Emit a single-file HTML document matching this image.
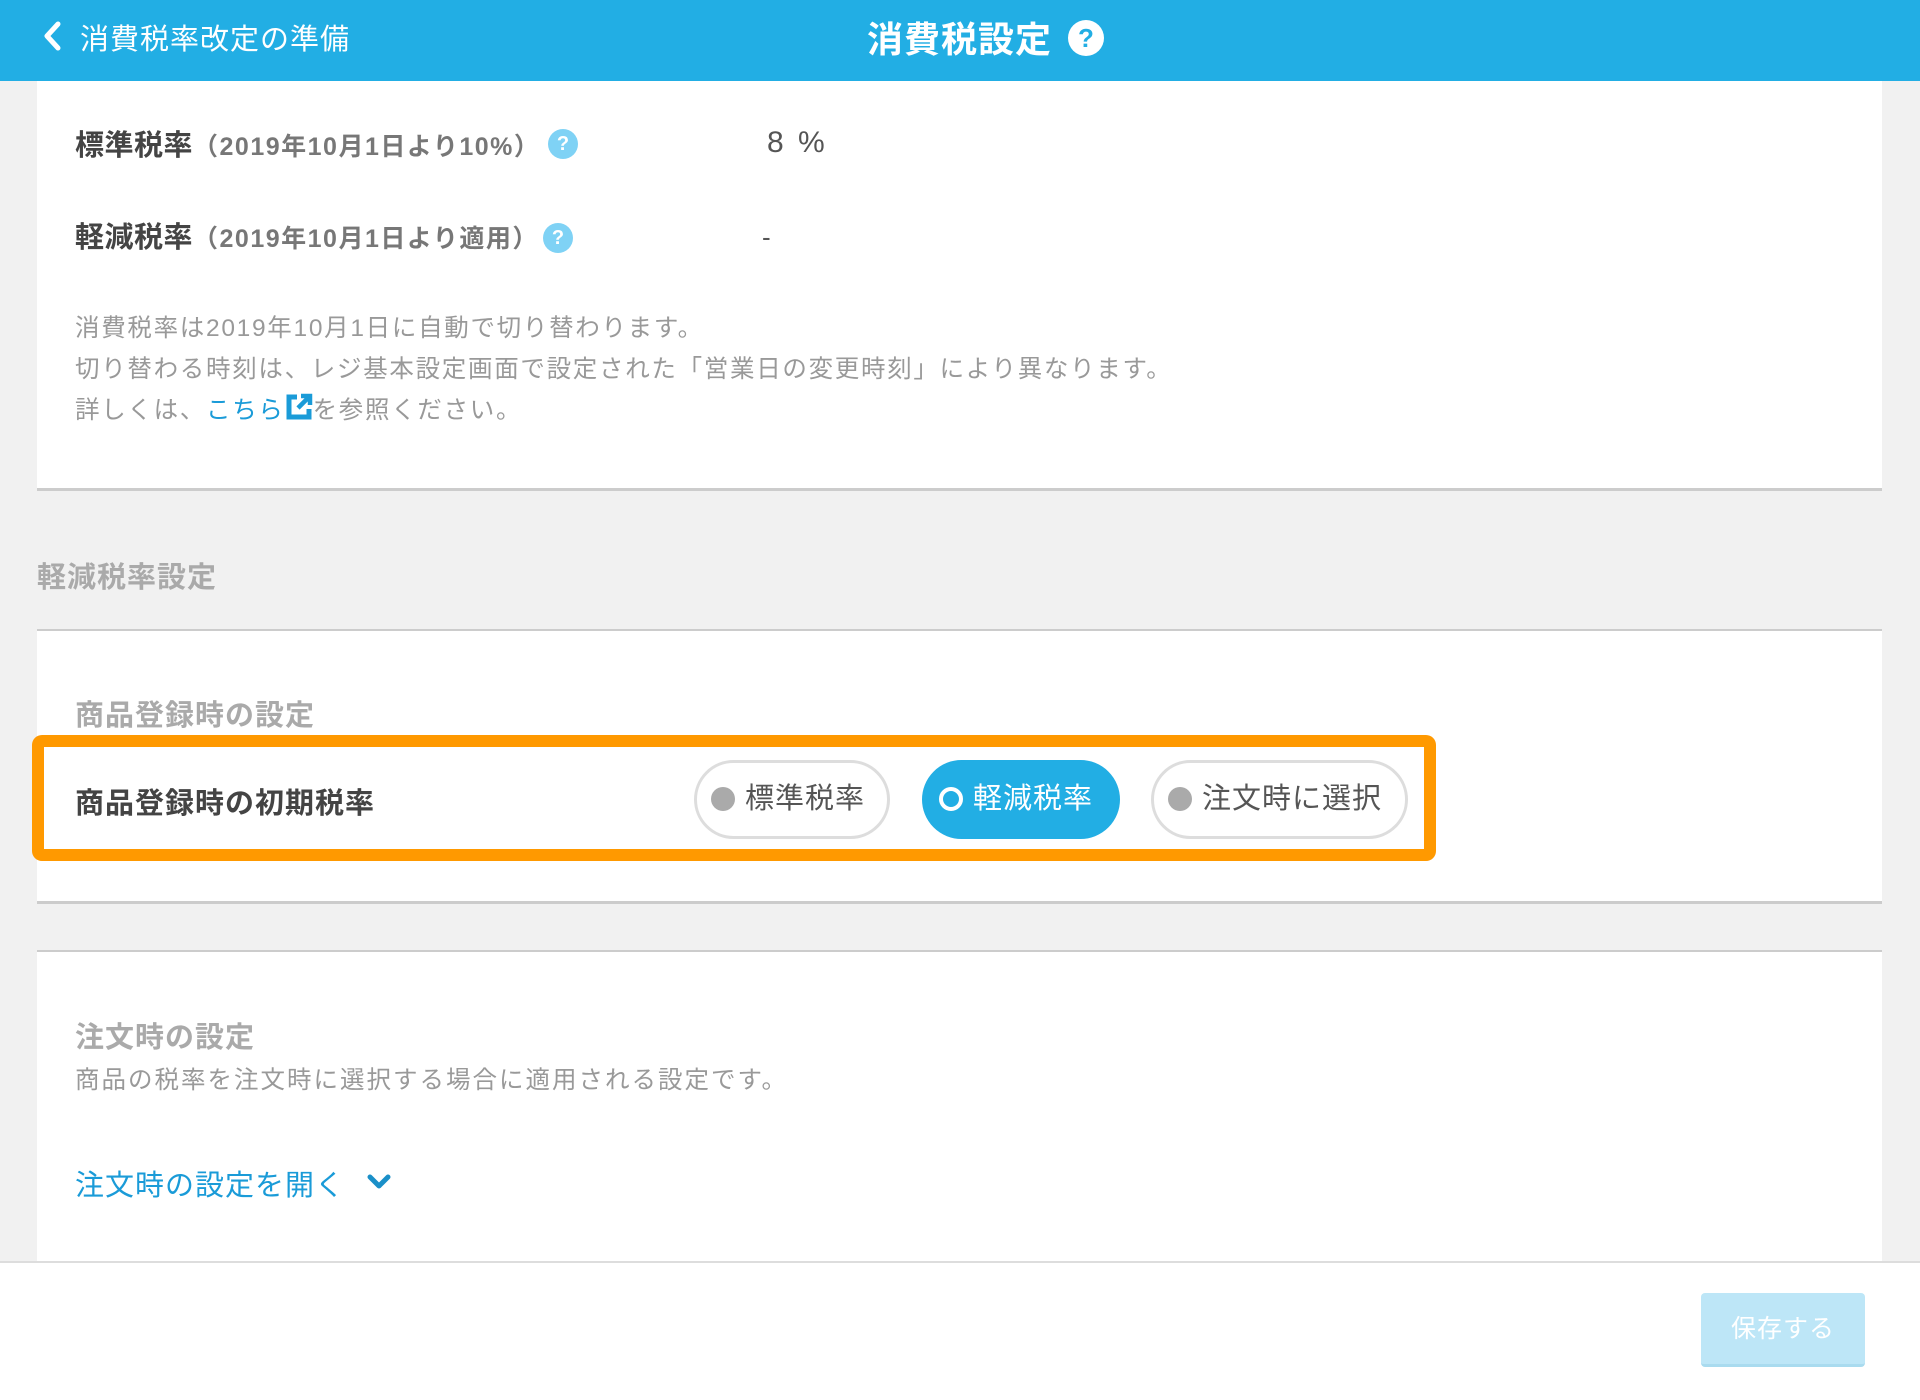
<!DOCTYPE html>
<html><head><meta charset="utf-8"><style>
*{margin:0;padding:0;box-sizing:border-box}
body{width:1920px;height:1400px;background:#f1f1f1;font-family:"Liberation Sans","Noto Sans CJK JP",sans-serif;position:relative;overflow:hidden}
.a{position:absolute;white-space:nowrap}
.hdr{position:absolute;left:0;top:0;width:1920px;height:81px;background:#22aee4}
.panel{position:absolute;left:37px;width:1845px;background:#fff}
.q{position:absolute;border-radius:50%;background:#7fd2f5;color:#fff;font-weight:bold;text-align:center}
.pill{position:absolute;top:760px;height:79px;border-radius:40px;border:3px solid #ddd;background:#fff;font-size:29px;color:#555;line-height:73px;letter-spacing:1px}
.dot{display:inline-block;width:24px;height:24px;border-radius:50%;background:#aaa;vertical-align:-3px;margin:0 10px 0 14px}
</style></head><body>
<div class="hdr"></div>
<svg class="a" style="left:40px;top:20px" width="24" height="32" viewBox="0 0 24 32"><path d="M18 4 L7 16 L18 28" stroke="#fff" stroke-width="5" fill="none" stroke-linecap="round" stroke-linejoin="round"/></svg>
<div class="a" style="left:80px;top:16px;font-size:29px;color:#fff;letter-spacing:1px">消費税率改定の準備</div>
<div class="a" style="left:867px;top:11px;font-size:36px;color:#fff;font-weight:bold;letter-spacing:1px">消費税設定</div>
<div class="q" style="left:1068px;top:20px;width:36px;height:36px;background:#fff;color:#22aee4;font-size:26px;line-height:36px">?</div>

<div class="panel" style="top:81px;height:410px;border-bottom:3px solid #ccc"></div>
<div class="a" style="left:75px;top:122px;font-size:29px;color:#444;font-weight:bold;letter-spacing:0.5px">標準税率<span style="font-size:25px;color:#777;letter-spacing:1.5px">（2019年10月1日より10%）</span></div>
<div class="q" style="left:548px;top:129px;width:30px;height:30px;font-size:20px;line-height:30px">?</div>
<div class="a" style="left:767px;top:126px;font-size:30px;color:#555;letter-spacing:3px">8 %</div>
<div class="a" style="left:75px;top:214px;font-size:29px;color:#444;font-weight:bold;letter-spacing:0.5px">軽減税率<span style="font-size:25px;color:#777;letter-spacing:1.5px">（2019年10月1日より適用）</span></div>
<div class="q" style="left:543px;top:223px;width:30px;height:30px;font-size:20px;line-height:30px">?</div>
<div class="a" style="left:762px;top:222px;font-size:26px;color:#555">-</div>
<div class="a" style="left:75px;top:308px;font-size:24.5px;color:#999;line-height:41px;letter-spacing:1.7px">消費税率は2019年10月1日に自動で切り替わります。<br>切り替わる時刻は、レジ基本設定画面で設定された「営業日の変更時刻」により異なります。<br>詳しくは、<span style="color:#1a9bd8">こちら</span><svg width="28" height="28" viewBox="0 0 28 28" style="vertical-align:-3px"><path d="M12 4H4v20h20v-8" stroke="#1a9bd8" stroke-width="5" fill="none"/><path d="M13 15L24 4M16 3h9v9" stroke="#1a9bd8" stroke-width="4.5" fill="none"/></svg>を参照ください。</div>

<div class="a" style="left:37px;top:554px;font-size:29px;color:#aaa;font-weight:bold;letter-spacing:1px">軽減税率設定</div>
<div class="panel" style="top:629px;height:275px;border-top:2px solid #ccc;border-bottom:3px solid #ccc"></div>
<div class="a" style="left:75px;top:692px;font-size:29px;color:#aaa;font-weight:bold;letter-spacing:1px">商品登録時の設定</div>
<div class="a" style="left:32px;top:735px;width:1404px;height:126px;border:12px solid #ff9900;border-radius:10px;background:#fff"></div>
<div class="a" style="left:75px;top:780px;font-size:29px;color:#444;font-weight:bold;letter-spacing:1px">商品登録時の初期税率</div>
<div class="pill" style="left:694px;width:196px"><span class="dot"></span>標準税率</div>
<div class="pill" style="left:922px;width:198px;background:#22aee4;border-color:#22aee4;color:#fff"><span class="dot" style="background:none;border:4px solid #fff"></span>軽減税率</div>
<div class="pill" style="left:1151px;width:257px"><span class="dot"></span>注文時に選択</div>

<div class="panel" style="top:950px;height:320px;border-top:2px solid #ccc"></div>
<div class="a" style="left:75px;top:1014px;font-size:29px;color:#aaa;font-weight:bold;letter-spacing:1px">注文時の設定</div>
<div class="a" style="left:75px;top:1061px;font-size:24.5px;color:#999;letter-spacing:2px">商品の税率を注文時に選択する場合に適用される設定です。</div>
<div class="a" style="left:75px;top:1162px;font-size:29px;color:#1a9bd8;letter-spacing:1px">注文時の設定を開く</div>
<svg class="a" style="left:366px;top:1172px" width="26" height="20" viewBox="0 0 26 20"><path d="M4 5L13 14L22 5" stroke="#1a8fc8" stroke-width="5" fill="none" stroke-linecap="round" stroke-linejoin="round"/></svg>

<div class="a" style="left:0;top:1261px;width:1920px;height:139px;background:#fff;border-top:2px solid #ddd"></div>
<div class="a" style="left:1701px;top:1293px;width:164px;height:74px;background:#bde6f7;border-radius:4px;border-bottom:3px solid #a9dbef;color:#fff;font-size:25px;text-align:center;line-height:72px;letter-spacing:1px">保存する</div>
</body></html>
